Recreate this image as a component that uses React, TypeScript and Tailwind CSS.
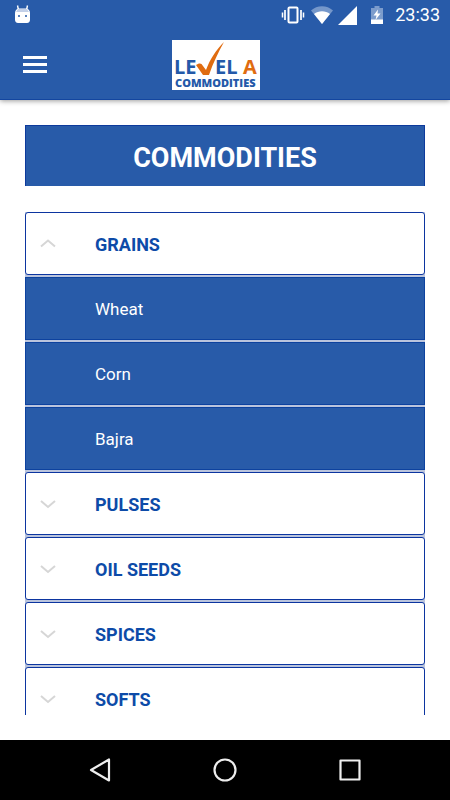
import React, { FunctionComponent, useState } from 'react';

interface Category {
  name: string;
  items: string[];
}

const categories: Category[] = [
  { name: 'GRAINS', items: ['Wheat', 'Corn', 'Bajra'] },
  { name: 'PULSES', items: [] },
  { name: 'OIL SEEDS', items: [] },
  { name: 'SPICES', items: [] },
  { name: 'SOFTS', items: [] },
];

const StatusBar: FunctionComponent = () => (
  <div className="flex h-[30px] items-center justify-between pl-[14px] pr-[10px]">
    <svg width="17" height="18" viewBox="0 0 17 18" className="mb-[2px]" aria-hidden="true">
      <path d="M4.500 5 3.500 0.500M12.500 5l1-4.500" stroke="#fff" strokeWidth="1.400" />
      <path d="M1 8C1 5 3 3.500 5 3.500h7c2 0 4 1.500 4 4.500v6.500c0 2-1 3.500-3 3.500H4c-2 0-3-1.500-3-3.500z" fill="#fff" />
      <path d="M4 4h9l2 3H2z" fill="#c3d0e8" />
      <rect x="4" y="10" width="2" height="2" fill="#5b82bd" />
      <rect x="11" y="10" width="2" height="2" fill="#5b82bd" />
    </svg>
    <div className="flex items-center">
      <svg width="24" height="18" viewBox="0 0 24 18" aria-hidden="true">
        <rect x="7.500" y="1.500" width="9" height="15" rx="1" fill="none" stroke="#fff" strokeWidth="2" />
        <path d="M4 4v10M20 4v10" stroke="#fff" strokeWidth="1.700" />
        <path d="M1.500 6.500v5M22.500 6.500v5" stroke="#fff" strokeWidth="1.500" />
      </svg>
      <svg className="ml-[6px]" width="22" height="18" viewBox="0 0 22 18" aria-hidden="true">
        <path d="M0 4.500C6-1.200 16-1.200 22 4.500L11 18z" fill="#7597ca" />
        <path d="M3 8C7.500 4.300 14.500 4.300 19 8L11 18z" fill="#fff" />
      </svg>
      <svg className="ml-[5px]" width="19" height="19" viewBox="0 0 19 19" aria-hidden="true">
        <path d="M19 0v19H0z" fill="#fff" />
      </svg>
      <svg className="ml-[14px]" width="12" height="18" viewBox="0 0 12 18" aria-hidden="true">
        <path d="M3.500 0h5v2H12v16H0V2h3.500z" fill="#7c9ccc" />
        <path d="M0 13.500h12V18H0z" fill="#fff" />
        <path d="M7 3.500 2.500 9.500h3L4.500 14 9.500 7.500h-3z" fill="#fff" />
      </svg>
      <span className="ml-[12px] text-lg leading-[30px]">23:33</span>
    </div>
  </div>
);

const Logo: FunctionComponent = () => (
  <svg
    width="88"
    height="50"
    viewBox="0 0 88 50"
    role="img"
    aria-label="Level A Commodities"
    className="bg-white font-['Open_Sans',sans-serif] font-bold"
  >
    <g fontSize="20" fill="#2459a8">
      <text x="2" y="34">LE</text>
      <text x="43" y="34">EL</text>
      <text x="71" y="34" fill="#e06c10">A</text>
    </g>
    <path d="M24 25c2-1.500 4-2 5.500-1l4.500 6C38 19 44 10 52 2 46 13 41 23 37 35h-6z" fill="#e06c10" />
    <text x="3" y="47" fontSize="11" fill="#2459a8" className="font-extrabold">COMMODITIES</text>
  </svg>
);

const Chevron: FunctionComponent<{ open: boolean }> = ({ open }) => (
  <svg width="16" height="10" viewBox="0 0 16 10" fill="none" stroke="#d6d6d6" strokeWidth="2" aria-hidden="true">
    <path d={open ? 'M1 7.500l7-6 7 6' : 'M1 2l7 6 7-6'} />
  </svg>
);

const App: FunctionComponent = () => {
  const [openName, setOpenName] = useState('GRAINS');

  return (
    <div className="flex h-screen flex-col bg-white font-['Roboto',sans-serif]">
      <header className="relative border-b border-[#1346a0] bg-[#285ba9] text-white shadow-[0_1px_5px_rgba(0,0,0,0.4)]">
        <StatusBar />
        <div className="grid h-[69px] grid-cols-[1fr_auto_1fr] items-center pl-[23px] pr-[41px]">
          <button type="button" aria-label="Menu" className="w-6">
            <svg width="24" height="17" viewBox="0 0 24 17" fill="#fff" aria-hidden="true">
              <path d="M0 0h24v3H0zM0 7h24v3H0zM0 14h24v3H0z" />
            </svg>
          </button>
          <Logo />
        </div>
      </header>

      <main className="min-h-0 flex-1 p-[25px]">
        <div className="h-full overflow-hidden">
          <h1 className="border-x border-t border-[#0d3a9c] bg-[#285ba9] pt-1 text-center text-[27px] leading-[56px] font-bold text-white">
            COMMODITIES
          </h1>
          <ul className="mt-[26px] flex flex-col gap-0.5 bg-[#bac4dd]">
            {categories.map(({ name, items }) => {
              const open = name === openName;
              return (
                <li key={name}>
                  <button
                    type="button"
                    aria-expanded={open}
                    onClick={() => setOpenName(open ? '' : name)}
                    className="flex h-[63px] w-full items-center rounded-[3px] border border-[#0c35a0] bg-white pl-[14px] text-lg font-bold text-[#0d4ba8]"
                  >
                    <Chevron open={open} />
                    <span className="ml-[39px] pt-0.5">{name}</span>
                  </button>
                  {open && items.length > 0 && (
                    <ul className="mt-0.5 flex flex-col gap-0.5">
                      {items.map((item) => (
                        <li
                          key={item}
                          className="flex h-[63px] items-center border border-[#0d429f] bg-[#285ba9] pt-0.5 pl-[69px] text-[17px] text-white"
                        >
                          {item}
                        </li>
                      ))}
                    </ul>
                  )}
                </li>
              );
            })}
          </ul>
        </div>
      </main>

      <nav className="grid h-[60px] grid-cols-3 place-items-center bg-black px-[38px]" aria-label="System">
        <button type="button" aria-label="Back">
          <svg width="24" height="26" viewBox="0 0 24 26" fill="none" stroke="#eee" strokeWidth="2.200" strokeLinejoin="round" aria-hidden="true">
            <path d="M3 13 21 2.500v21z" />
          </svg>
        </button>
        <button type="button" aria-label="Home">
          <svg width="26" height="26" viewBox="0 0 26 26" fill="none" stroke="#eee" strokeWidth="2.200" aria-hidden="true">
            <circle cx="13" cy="13" r="10.500" />
          </svg>
        </button>
        <button type="button" aria-label="Recent apps">
          <svg width="24" height="24" viewBox="0 0 24 24" fill="none" stroke="#eee" strokeWidth="2.200" strokeLinejoin="round" aria-hidden="true">
            <rect x="2.500" y="2.500" width="19" height="19" />
          </svg>
        </button>
      </nav>
    </div>
  );
};

export default App;
